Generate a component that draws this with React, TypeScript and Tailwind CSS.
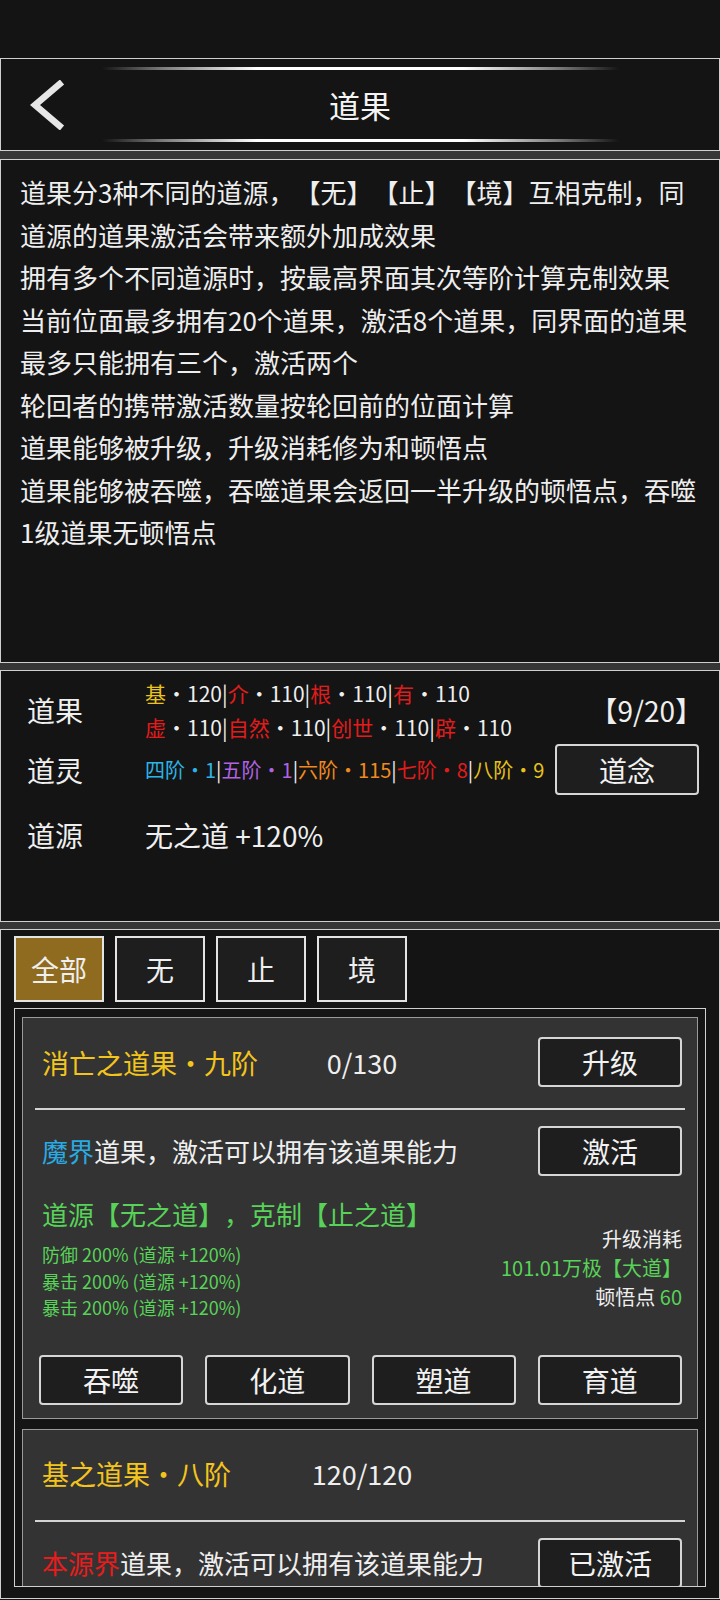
import React from 'react';

const FONT = { fontFamily: '"Noto Sans CJK SC", "Noto Sans", sans-serif' };

const descLines = [
  '道果分3种不同的道源，【无】【止】【境】互相克制，同',
  '道源的道果激活会带来额外加成效果',
  '拥有多个不同道源时，按最高界面其次等阶计算克制效果',
  '当前位面最多拥有20个道果，激活8个道果，同界面的道果',
  '最多只能拥有三个，激活两个',
  '轮回者的携带激活数量按轮回前的位面计算',
  '道果能够被升级，升级消耗修为和顿悟点',
  '道果能够被吞噬，吞噬道果会返回一半升级的顿悟点，吞噬',
  '1级道果无顿悟点',
];

const Sep = () => <span className="text-[#eeeeee]">|</span>;

const Band = ({ h }: { h: string }) => <div className={`${h} bg-[#363636]`} />;

const Btn = ({ children, className = '' }: { children: React.ReactNode; className?: string }) => (
  <button
    className={`h-[50px] rounded-[4px] border-2 border-[#d6d6d6] bg-[#1e1e1e] text-[28px] leading-none text-[#f2f2f2] flex items-center justify-center ${className}`}
  >
    {children}
  </button>
);

const Divider = () => <div className="h-[2px] bg-[#d4d4d4]" />;

export default function App() {
  return (
    <div
      className="w-[720px] h-[1600px] overflow-hidden bg-[#141414] text-[#efefef] [text-spacing-trim:space-all]"
      style={FONT}
    >
      {/* status area */}
      <div className="h-[58px]" />

      {/* header */}
      <div className="h-[93px] border border-[#cfcfcf] flex flex-col justify-between py-[8px]">
        <div className="mx-auto w-[517px] h-[3px] rounded-full bg-[linear-gradient(90deg,rgba(255,255,255,0)_0%,rgba(255,255,255,0.45)_12%,#ffffff_30%,#ffffff_70%,rgba(255,255,255,0.45)_88%,rgba(255,255,255,0)_100%)]" />
        <div className="grid grid-cols-[1fr_auto_1fr] items-center">
          <svg className="ml-[29px]" width="36" height="50" viewBox="0 0 36 50">
            <polyline points="32,2 5,25 32,48" fill="none" stroke="#e6e6e6" strokeWidth="6.5" />
          </svg>
          <span className="text-[31px] leading-none text-[#f4f4f4]">道果</span>
          <span />
        </div>
        <div className="mx-auto w-[517px] h-[3px] rounded-full bg-[linear-gradient(90deg,rgba(255,255,255,0)_0%,rgba(255,255,255,0.45)_12%,#ffffff_30%,#ffffff_70%,rgba(255,255,255,0.45)_88%,rgba(255,255,255,0)_100%)]" />
      </div>

      <Band h="h-[8px]" />

      {/* description */}
      <div className="h-[504px] border border-[#cfcfcf] pt-[11px] pl-[19px] text-[26px] leading-[42.5px] text-[#eeeeee]">
        {descLines.map((l, i) => (
          <div key={i} className="whitespace-nowrap">{l}</div>
        ))}
      </div>

      <Band h="h-[7px]" />

      {/* stats */}
      <div className="h-[252px] border border-[#cfcfcf] pt-[5px] pl-[26px] pr-[20px]">
        <div className="flex items-center h-[68px]">
          <div className="w-[118px] text-[28px] leading-none">道果</div>
          <div className="flex-1 text-[21px] leading-[34px] whitespace-nowrap">
            <div>
              <span className="text-[#eac31c]">基</span>·120<Sep />
              <span className="text-[#e21c1c]">介</span>·110<Sep />
              <span className="text-[#e21c1c]">根</span>·110<Sep />
              <span className="text-[#e21c1c]">有</span>·110
            </div>
            <div>
              <span className="text-[#e21c1c]">虚</span>·110<Sep />
              <span className="text-[#e21c1c]">自然</span>·110<Sep />
              <span className="text-[#e21c1c]">创世</span>·110<Sep />
              <span className="text-[#e21c1c]">辟</span>·110
            </div>
          </div>
          <div className="text-[28px] leading-none -mr-[4px]">【9/20】</div>
        </div>
        <div className="flex items-center h-[51px]">
          <div className="w-[118px] text-[28px] leading-none">道灵</div>
          <div className="flex-1 text-[20px] leading-none whitespace-nowrap">
            <span className="text-[#2cb4e6]">四阶·1</span><Sep />
            <span className="text-[#b063e2]">五阶·1</span><Sep />
            <span className="text-[#f08a1e]">六阶·115</span><Sep />
            <span className="text-[#e21c1c]">七阶·8</span><Sep />
            <span className="text-[#e6c21c]">八阶·9</span>
          </div>
          <Btn className="w-[144px] !h-[51px]">道念</Btn>
        </div>
        <div className="flex items-center h-[40px] mt-[20px]">
          <div className="w-[118px] text-[28px] leading-none">道源</div>
          <div className="text-[28px] leading-none">无之道 +120%</div>
        </div>
      </div>

      <Band h="h-[7px]" />

      {/* list panel */}
      <div className="h-[670px] border border-[#cfcfcf] pt-[6px] pb-[11px] flex flex-col">
        <div className="flex gap-[11px] pl-[13px]">
          {['全部', '无', '止', '境'].map((t, i) => (
            <div
              key={t}
              className={`w-[90px] h-[66px] border-2 border-[#e4e4e4] flex items-center justify-center text-[28px] leading-none ${
                i === 0 ? 'bg-[#8e6b1f]' : 'bg-[#1e1e1e]'
              }`}
            >
              {t}
            </div>
          ))}
        </div>

        <div className="mt-[6px] mx-[13px] flex-1 border border-[#d0d0d0] bg-[#151515] overflow-hidden pt-[8px] px-[7px] flex flex-col gap-[10px]">
          {/* card 1 */}
          <div className="shrink-0 border border-[#9a9a9a] bg-[#333333] px-[12px] pt-[19px] pb-[13px]">
            <div className="grid grid-cols-[1fr_auto_1fr] items-center h-[50px] pl-[7px] pr-[3px]">
              <span className="text-[27px] leading-none text-[#f3c51c] whitespace-nowrap">消亡之道果·九阶</span>
              <span className="text-[27px] leading-none">0/130</span>
              <Btn className="w-[144px] justify-self-end">升级</Btn>
            </div>
            <div className="mt-[21px]">
              <Divider />
            </div>
            <div className="mt-[16px] flex items-center justify-between h-[50px] pl-[7px] pr-[3px]">
              <span className="text-[26px] leading-none whitespace-nowrap">
                <span className="text-[#2aaae2]">魔界</span>道果，激活可以拥有该道果能力
              </span>
              <Btn className="w-[144px]">激活</Btn>
            </div>
            <div className="mt-[21px] flex justify-between pl-[7px] pr-[3px]">
              <div>
                <div className="text-[26px] leading-[34px] text-[#58d258] whitespace-nowrap">道源【无之道】，克制【止之道】</div>
                <div className="mt-[10px] text-[18px] leading-[26.5px] text-[#58d258]">
                  <div>防御 200% (道源 +120%)</div>
                  <div>暴击 200% (道源 +120%)</div>
                  <div>暴击 200% (道源 +120%)</div>
                </div>
              </div>
              <div className="mt-[27px] text-right text-[20px] leading-[29px]">
                <div>升级消耗</div>
                <div className="text-[#58d258]">101.01万极【大道】</div>
                <div>
                  顿悟点 <span className="text-[#58d258]">60</span>
                </div>
              </div>
            </div>
            <div className="mt-[34px] grid grid-cols-4 gap-[22px] pl-[4px] pr-[3px]">
              <Btn>吞噬</Btn>
              <Btn>化道</Btn>
              <Btn>塑道</Btn>
              <Btn>育道</Btn>
            </div>
          </div>

          {/* card 2 */}
          <div className="shrink-0 border border-[#9a9a9a] bg-[#333333] px-[12px] pt-[19px] pb-[13px]">
            <div className="grid grid-cols-[1fr_auto_1fr] items-center h-[50px] pl-[7px] pr-[3px]">
              <span className="text-[27px] leading-none text-[#f3c51c] whitespace-nowrap">基之道果·八阶</span>
              <span className="text-[27px] leading-none">120/120</span>
              <span />
            </div>
            <div className="mt-[21px]">
              <Divider />
            </div>
            <div className="mt-[16px] flex items-center justify-between h-[50px] pl-[7px] pr-[3px]">
              <span className="text-[26px] leading-none whitespace-nowrap">
                <span className="text-[#e81c1c]">本源界</span>道果，激活可以拥有该道果能力
              </span>
              <Btn className="w-[144px]">已激活</Btn>
            </div>
          </div>
        </div>
      </div>
    </div>
  );
}
